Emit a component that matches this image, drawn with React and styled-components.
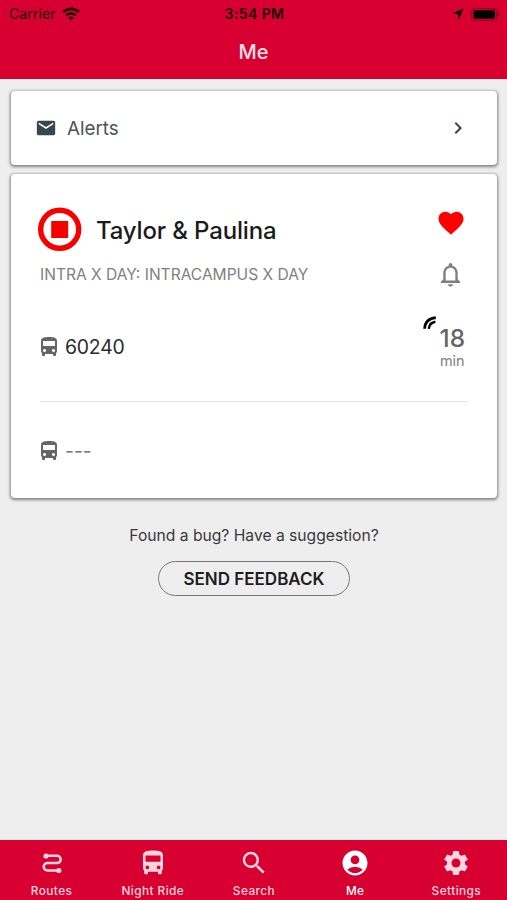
import styled, { createGlobalStyle } from 'styled-components';
import {
  MdAccountCircle,
  MdChevronRight,
  MdDirectionsBus,
  MdEmail,
  MdFavorite,
  MdNotificationsNone,
  MdSearch,
  MdSettings,
} from 'react-icons/md';

const GlobalStyle = createGlobalStyle`
  * {
    box-sizing: border-box;
  }

  body {
    margin: 0;
    background: #eeeeee;
    font-family: Inter, 'Liberation Sans', sans-serif;
  }

  svg {
    display: block;
    flex: none;
  }
`;

const Screen = styled.div`
  display: flex;
  flex-direction: column;
  height: 900px;
  background: #eeeeee;
`;

const Header = styled.header`
  height: 79px;
  background: #d80031;
`;

const StatusBar = styled.div`
  display: grid;
  grid-template-columns: 1fr auto 1fr;
  align-items: center;
  height: 27px;
  padding: 0 7px 0 9px;
  color: #1c0006;
  font-size: 14.2px;
  line-height: 28px;
`;

const StatusGroup = styled.div`
  display: flex;
  align-items: center;
  justify-content: ${({ $end }) => ($end ? 'flex-end' : 'flex-start')};
  gap: ${({ $end }) => ($end ? '7px' : '6px')};
`;

const Clock = styled.div`
  font-weight: 600;
  font-size: 14px;
  letter-spacing: 0.4px;
`;

const Title = styled.h1`
  margin: 0;
  color: #ffe3e9;
  font-size: 20px;
  font-weight: 500;
  line-height: 51px;
  text-align: center;
`;

const Content = styled.main`
  display: flex;
  flex: 1;
  flex-direction: column;
  gap: 9px;
  padding: 12px 10px 0 11px;
`;

const Card = styled.section`
  border-radius: 4px;
  background: #fff;
  box-shadow: 0 1px 3px 0.5px rgba(0, 0, 0, 0.45);
`;

const AlertsCard = styled(Card)`
  display: flex;
  align-items: center;
  height: 74px;
  padding: 0 27px 0 24px;
  color: #37474f;
`;

const AlertsLabel = styled.div`
  flex: 1;
  margin-left: 10px;
  color: #4c5357;
  font-size: 18.8px;
`;

const StopCard = styled(Card)`
  height: 324px;
  padding: 33px 29px 0;
`;

const StopHead = styled.div`
  display: flex;
  align-items: center;
  height: 44px;
  margin-left: -2px;
`;

const StopName = styled.h2`
  flex: 1;
  margin: 2px 0 0 14px;
  color: #1b1b1b;
  font-size: 24px;
  font-weight: 500;
  letter-spacing: -0.15px;
  white-space: nowrap;
`;

const HeartIcon = styled(MdFavorite)`
  margin: -12px 2px 0 0;
  color: #ff0000;
`;

const RouteRow = styled.div`
  display: flex;
  align-items: center;
  justify-content: space-between;
  height: 47px;
  padding-right: 3px;
  color: #808080;
  font-size: 15.55px;
`;

const BusRow = styled.div`
  display: flex;
  align-items: center;
  height: 98px;
  margin-left: -3px;
  color: #666;
`;

const Divider = styled.div`
  height: 1px;
  margin: 5px 0 0;
  background: #e4e4e4;
`;

const BusNumber = styled.div`
  flex: 1;
  margin-left: 4px;
  color: ${({ $empty }) => ($empty ? '#777' : '#2b2b2b')};
  font-size: 19.4px;
  letter-spacing: ${({ $empty }) => ($empty ? '0' : '-0.2px')};
`;

const Arrival = styled.div`
  position: relative;
  margin: 1px 3px 0 0;
  text-align: center;
`;

const LiveIcon = styled.svg`
  position: absolute;
  top: -9px;
  left: -17px;
`;

const Minutes = styled.div`
  color: #666;
  font-size: 24.4px;
  font-weight: 450;
  line-height: 26px;
`;

const Unit = styled.div`
  color: #808080;
  font-size: 14.4px;
  line-height: 19px;
`;

const Feedback = styled.div`
  display: flex;
  flex-direction: column;
  align-items: center;
  margin-top: 19px;
`;

const Question = styled.div`
  color: #3a3a3a;
  font-size: 15.65px;
  line-height: 20px;
`;

const FeedbackButton = styled.button`
  width: 192px;
  height: 35px;
  margin-top: 15px;
  padding: 0;
  border: 1px solid #777;
  border-radius: 18px;
  background: transparent;
  color: #1e1e1e;
  font-family: inherit;
  font-size: 17px;
  font-weight: 600;
`;

const TabBar = styled.nav`
  display: grid;
  grid-template-columns: repeat(5, 1fr);
  height: 60px;
  padding-left: 1px;
  background: #d80031;
`;

const Tab = styled.div`
  display: flex;
  flex-direction: column;
  align-items: center;
  padding-top: 8px;
  color: ${({ $active }) => ($active ? '#fff' : '#ffd6de')};
`;

const TabLabel = styled.div`
  margin-top: 5px;
  font-size: 11.8px;
  font-weight: 500;
  letter-spacing: 0.45px;
  line-height: 16px;
`;

const WifiIcon = () => (
  <svg width="18" height="14" viewBox="0 0 18 14" fill="none" stroke="currentColor">
    <path d="M1.2 5a11.2 11.2 0 0 1 15.6 0" strokeWidth="2.6" />
    <path d="M4.2 8.3a7 7 0 0 1 9.6 0" strokeWidth="2.5" />
    <path d="M9 13.6 6.2 10.7a4.2 4.2 0 0 1 5.6 0z" fill="currentColor" stroke="none" />
  </svg>
);

const LocationIcon = () => (
  <svg width="12" height="12" viewBox="0 0 11 11" fill="currentColor">
    <path d="M10.8.2 6.2 10.7 5.2 5.8.2 5z" />
  </svg>
);

const BatteryIcon = () => (
  <svg width="29" height="13" viewBox="0 0 29 13">
    <rect x=".6" y=".6" width="25.2" height="11.8" rx="3.2" fill="none" stroke="#8b001f" strokeWidth="1.1" />
    <rect x="2.3" y="2.2" width="21.8" height="8.6" rx="1.8" fill="#000" />
    <path d="M27 4.5q1.4.5 1.4 2T27 8.5z" fill="#8b001f" />
  </svg>
);

const StopIcon = () => (
  <svg width="44" height="44" viewBox="0 0 44 44">
    <circle cx="21.7" cy="22.3" r="19" fill="#fff" stroke="#f80000" strokeWidth="5.4" />
    <rect x="13.2" y="14" width="17" height="17" fill="#f80000" />
  </svg>
);

const RoutesIcon = () => (
  <svg width="30" height="30" viewBox="0 0 30 30" fill="none" stroke="currentColor">
    <path
      d="M9 7.7h11a3.7 3.7 0 0 1 0 7.4H10.4a3.7 3.7 0 0 0 0 7.4H22"
      strokeWidth="2.5"
    />
    <circle cx="9" cy="8" r="2.6" fill="currentColor" stroke="none" />
    <circle cx="21.8" cy="22.5" r="2.6" fill="currentColor" stroke="none" />
  </svg>
);

const TABS = [
  { label: 'Routes', Icon: RoutesIcon },
  { label: 'Night Ride', Icon: MdDirectionsBus },
  { label: 'Search', Icon: MdSearch },
  { label: 'Me', Icon: MdAccountCircle, active: true },
  { label: 'Settings', Icon: MdSettings },
];

export default () => (
  <Screen>
    <GlobalStyle />
    <Header>
      <StatusBar>
        <StatusGroup>
          <span>Carrier</span>
          <WifiIcon />
        </StatusGroup>
        <Clock>3:54 PM</Clock>
        <StatusGroup $end>
          <LocationIcon />
          <BatteryIcon />
        </StatusGroup>
      </StatusBar>
      <Title>Me</Title>
    </Header>
    <Content>
      <AlertsCard>
        <MdEmail size={22} />
        <AlertsLabel>Alerts</AlertsLabel>
        <MdChevronRight size={24} />
      </AlertsCard>
      <StopCard>
        <StopHead>
          <StopIcon />
          <StopName>Taylor &amp; Paulina</StopName>
          <HeartIcon size={30} />
        </StopHead>
        <RouteRow>
          INTRA X DAY: INTRACAMPUS X DAY
          <MdNotificationsNone size={29} />
        </RouteRow>
        <BusRow>
          <MdDirectionsBus size={24} />
          <BusNumber>60240</BusNumber>
          <Arrival>
            <LiveIcon width="14" height="14" viewBox="0 0 14 14" fill="none" stroke="#000">
              <path d="M1.6 12.8Q2 2.6 12.8 1.6" strokeWidth="2.7" />
              <path d="M5.8 12.8Q6.2 6.8 12.4 5.8" strokeWidth="2.4" />
            </LiveIcon>
            <Minutes>18</Minutes>
            <Unit>min</Unit>
          </Arrival>
        </BusRow>
        <Divider />
        <BusRow>
          <MdDirectionsBus size={24} />
          <BusNumber $empty>---</BusNumber>
        </BusRow>
      </StopCard>
      <Feedback>
        <Question>Found a bug? Have a suggestion?</Question>
        <FeedbackButton>SEND FEEDBACK</FeedbackButton>
      </Feedback>
    </Content>
    <TabBar>
      {TABS.map(({ label, Icon, active }) => (
        <Tab key={label} $active={active}>
          <Icon size={30} />
          <TabLabel>{label}</TabLabel>
        </Tab>
      ))}
    </TabBar>
  </Screen>
);
